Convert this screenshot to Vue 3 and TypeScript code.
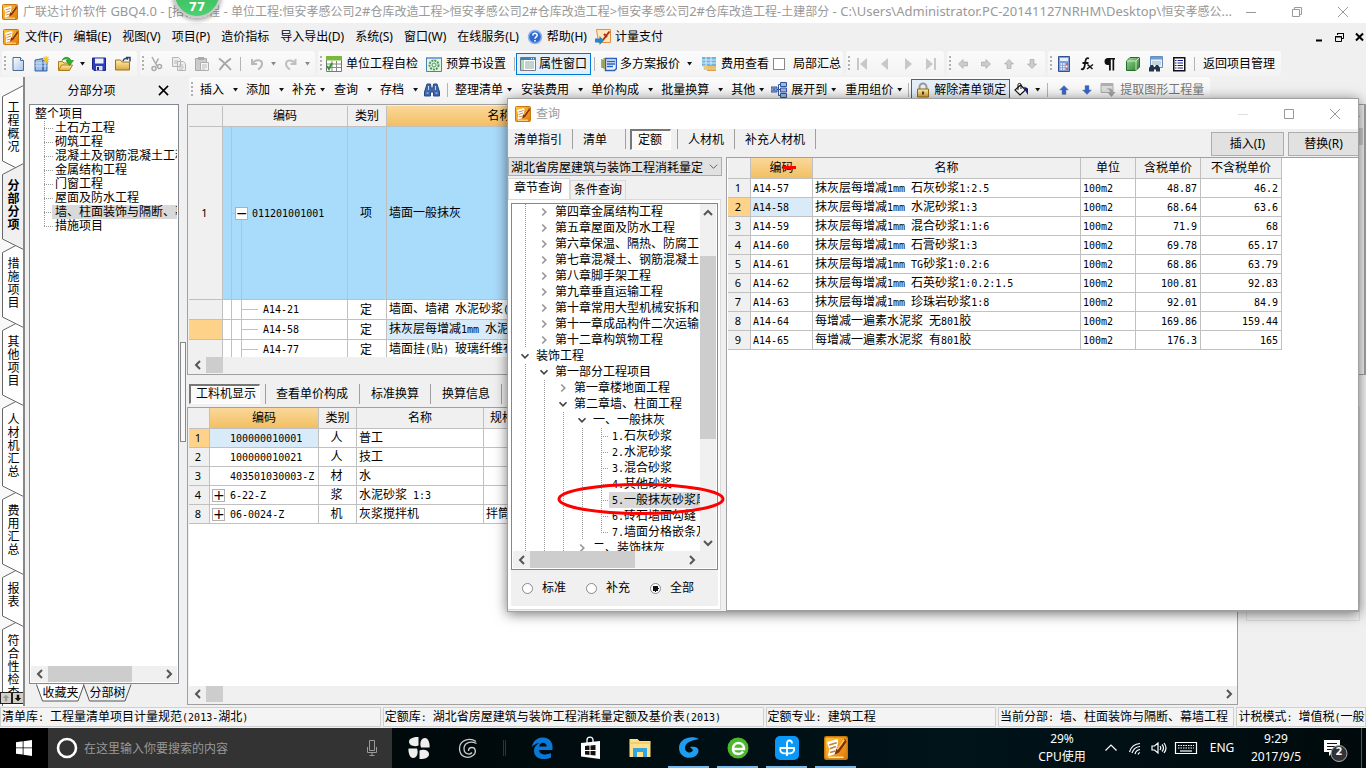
<script setup lang="ts">
import { h, ref } from 'vue'

// Splits text into CJK runs and half-width ASCII runs, so that ASCII is set in a 6px wide face.
const Mix = (p: { t: string }) =>
  h(
    'span',
    { class: 'mix' },
    (p.t.match(/[\x20-\x7e]+|[^\x20-\x7e]+/g) || []).map(s =>
      /^[\x20-\x7e]/.test(s) ? h('span', { class: 'half' }, s) : s
    )
  )
Mix.props = ['t']

const keyword = ref('')
const scope = ref('全部')
const book = ref('湖北省房屋建筑与装饰工程消耗量定')

const caption =
  '广联达计价软件 GBQ4.0 - [招标工程 - 单位工程:恒安孝感公司2#仓库改造工程>恒安孝感公司2#仓库改造工程>恒安孝感公司2#仓库改造工程-土建部分 - C:\\Users\\Administrator.PC-20141127NRHM\\Desktop\\恒安孝感公...'
const menusA = ['文件(F)', '编辑(E)', '视图(V)', '项目(P)', '造价指标', '导入导出(D)', '系统(S)', '窗口(W)', '在线服务(L)']
const sideTabs = ['工程概况', '分部分项', '措施项目', '其他项目', '人材机汇总', '费用汇总', '报表', '符合性检查'].map((t, i) => {
  const H = t.length * 13 + 35
  return { t, i, H, d: `M23.5 ${H - 0.5}L2.5 ${H - 11}V11.5L23.5 0.5` }
})
const parts = ['土石方工程', '砌筑工程', '混凝土及钢筋混凝土工程', '金属结构工程', '门窗工程', '屋面及防水工程', '墙、柱面装饰与隔断、幕墙', '措施项目']

const editMenus = [
  { t: '插入' }, { t: '添加' }, { t: '补充', tight: true }, { t: '查询' }, { t: '存档' }
]
const priceMenus = [
  { t: '整理清单', tight: true }, { t: '安装费用' }, { t: '单价构成' }, { t: '批量换算' }, { t: '其他', tight: true }
]

const subRows = [
  { code: 'A14-21', name: '墙面、墙裙 水泥砂浆(' },
  { code: 'A14-58', name: '抹灰层每增减1mm 水泥', on: true },
  { code: 'A14-77', name: '墙面挂(贴) 玻璃纤维布' }
]
const resRows = [
  { n: 1, code: '100000010001', kind: '人', name: '普工', spec: '', on: true },
  { n: 2, code: '100000010021', kind: '人', name: '技工', spec: '' },
  { n: 3, code: '403501030003-Z', kind: '材', name: '水', spec: '' },
  { n: 4, code: '6-22-Z', kind: '浆', name: '水泥砂浆 1:3', spec: '', plus: true },
  { n: 8, code: '06-0024-Z', kind: '机', name: '灰浆搅拌机', spec: '拌筒', plus: true }
]
const quotas = [
  ['A14-57', '抹灰层每增减1mm 石灰砂浆1:2.5', '48.87', '46.2'],
  ['A14-58', '抹灰层每增减1mm 水泥砂浆1:3', '68.64', '63.6'],
  ['A14-59', '抹灰层每增减1mm 混合砂浆1:1:6', '71.9', '68'],
  ['A14-60', '抹灰层每增减1mm 石膏砂浆1:3', '69.78', '65.17'],
  ['A14-61', '抹灰层每增减1mm TG砂浆1:0.2:6', '68.86', '63.79'],
  ['A14-62', '抹灰层每增减1mm 石英砂浆1:0.2:1.5', '100.81', '92.83'],
  ['A14-63', '抹灰层每增减1mm 珍珠岩砂浆1:8', '92.01', '84.9'],
  ['A14-64', '每增减一遍素水泥浆 无801胶', '169.86', '159.44'],
  ['A14-65', '每增减一遍素水泥浆 有801胶', '176.3', '165']
]
type Node = { d: number; t: string; k: 'open' | 'shut' | 'leaf'; on?: boolean; last?: boolean }
const chapters: Node[] = [
  { d: 1, t: '第四章金属结构工程', k: 'shut' },
  { d: 1, t: '第五章屋面及防水工程', k: 'shut' },
  { d: 1, t: '第六章保温、隔热、防腐工', k: 'shut' },
  { d: 1, t: '第七章混凝土、钢筋混凝土', k: 'shut' },
  { d: 1, t: '第八章脚手架工程', k: 'shut' },
  { d: 1, t: '第九章垂直运输工程', k: 'shut' },
  { d: 1, t: '第十章常用大型机械安拆和', k: 'shut' },
  { d: 1, t: '第十一章成品构件二次运输', k: 'shut' },
  { d: 1, t: '第十二章构筑物工程', k: 'shut' },
  { d: 0, t: '装饰工程', k: 'open' },
  { d: 1, t: '第一部分工程项目', k: 'open' },
  { d: 2, t: '第一章楼地面工程', k: 'shut' },
  { d: 2, t: '第二章墙、柱面工程', k: 'open' },
  { d: 3, t: '一、一般抹灰', k: 'open' },
  { d: 4, t: '1.石灰砂浆', k: 'leaf' },
  { d: 4, t: '2.水泥砂浆', k: 'leaf' },
  { d: 4, t: '3.混合砂浆', k: 'leaf' },
  { d: 4, t: '4.其他砂浆', k: 'leaf' },
  { d: 4, t: '5.一般抹灰砂浆厚', k: 'leaf', on: true },
  { d: 4, t: '6.砖石墙面勾缝', k: 'leaf' },
  { d: 4, t: '7.墙面分格嵌条及', k: 'leaf', last: true },
  { d: 3, t: '二、装饰抹灰', k: 'shut' }
]
</script>

<template>
  <div class="desk">
    <svg class="defs" aria-hidden="true">
      <defs>
        <linearGradient id="gOr" x1="0" y1="0" x2="1" y2="1"><stop offset="0" stop-color="#ffc83c" /><stop offset="1" stop-color="#e07808" /></linearGradient>
        <linearGradient id="gPg" x1="0" y1="0" x2="1" y2="1"><stop offset="0" stop-color="#fff" /><stop offset="1" stop-color="#a9c4e6" /></linearGradient>
        <linearGradient id="gFo" x1="0" y1="0" x2="0" y2="1"><stop offset="0" stop-color="#fff0b0" /><stop offset="1" stop-color="#dca63c" /></linearGradient>
        <linearGradient id="gGr" x1="0" y1="0" x2="1" y2="1"><stop offset="0" stop-color="#a4dc98" /><stop offset="1" stop-color="#237a2c" /></linearGradient>
      </defs>
      <symbol id="logo" viewBox="0 0 16 16"><rect x=".5" y=".5" width="15" height="15" rx="1" fill="url(#gOr)" stroke="#c8780c" /><path d="M2 4l7-2 .5 1.500L8 12l-5.500 1.500L3.500 9z" fill="#fff" /><path d="M3.500 6l5-1.500M3.800 8.500L8 7M4 11l3.500-1" stroke="#c88030" stroke-width=".9" /><path d="M14 1.500L8 9l-1 3.500L10 11l5-7z" fill="#8a2c10" /><path d="M13.500 2.500L8.800 9" stroke="#ffd050" /><path d="M3 14.200h10" stroke="#ffe9b0" /></symbol>
      <symbol id="new" viewBox="0 0 16 16"><path d="M3 1.500h7.500l3 3v10H3z" fill="url(#gPg)" stroke="#4b6c98" /><path d="M10.500 1.500v3h3" fill="#fff" stroke="#4b6c98" /></symbol>
      <symbol id="build" viewBox="0 0 16 16"><path d="M1 4l8-1.500V15H1zM9 4h4v11H9z" fill="#7aa5dc" stroke="#3d6aa8" /><path d="M3 4v10M5 4v10M7 4v10M11 5v9M1 7h12M1 10h12" stroke="#dbe9fa" stroke-width=".8" /><path d="M12 0v7M8.500 3.500h7M9.500 1l5 5M14.500 1l-5 5" stroke="#f5c518" stroke-width="1.200" /></symbol>
      <symbol id="open" viewBox="0 0 16 16"><path d="M.5 14V5.500h4L6 7h6v2" fill="#f8d870" stroke="#ad7c16" /><path d="M.5 14.500L3.500 9h11l-3 5.500z" fill="url(#gFo)" stroke="#ad7c16" /><path d="M4 4.500C5.500.5 11 0 13 4.500h2.500L11.500 9.500 8 4.500h2C9.500 2.500 6 2.500 4 4.500z" fill="#2bb32b" stroke="#1d7e1d" stroke-width=".6" /></symbol>
      <symbol id="save" viewBox="0 0 16 16"><path d="M1.500 2h13v12.500H3L1.500 13z" fill="#2c3fbd" stroke="#1a2680" /><path d="M4 2.500h8.500v5H4z" fill="#eef2ff" /><path d="M5 10h6.500v4.500H5z" fill="#dfe3f5" /><path d="M6 11h2v3H6z" fill="#1a2680" /></symbol>
      <symbol id="folder" viewBox="0 0 16 16"><path d="M.5 14V4h5l1.500 2h7.500v8z" fill="url(#gFo)" stroke="#9a7020" /><path d="M8 5c1-3 4-3 5-1.500M11 1.500h4v4" fill="none" stroke="#28466e" stroke-width="1.500" /></symbol>
      <symbol id="cut" viewBox="0 0 16 16"><path d="M4 1l5 9M10.500 2.500L7.500 8" stroke="#aaa" stroke-width="1.500" /><circle cx="6" cy="12.500" r="2" fill="none" stroke="#aaa" stroke-width="1.500" /><circle cx="11.500" cy="10.500" r="2" fill="none" stroke="#aaa" stroke-width="1.500" /></symbol>
      <symbol id="copy" viewBox="0 0 16 16"><path d="M1.500 1.500h6l2 2v7h-8zM6.500 5.500h6l2 2v7h-8z" fill="#eee" stroke="#b4b4b4" /><path d="M3 5h4M3 7h3M8 9h4M8 11h5M8 13h4" stroke="#bbb" /></symbol>
      <symbol id="paste" viewBox="0 0 16 16"><path d="M1.500 2.500h11v12h-11z" fill="#ccc" stroke="#aaa" /><path d="M4 1h6v3H4z" fill="#aaa" /><path d="M6.500 6.500h8v8h-8z" fill="#f3f3f3" stroke="#b0b0b0" /><path d="M8 9h5M8 11h5M8 13h3" stroke="#bbb" /></symbol>
      <symbol id="del" viewBox="0 0 16 16"><path d="M2 2.500Q7 6 14 14M14 2.500Q7 7 2.500 14" fill="none" stroke="#a6a6a6" stroke-width="1.800" /></symbol>
      <symbol id="undo" viewBox="0 0 16 16"><path d="M3 3v5h5M3.500 7.500c3-5 10-4 9.500.500 0 3-2 4-4 5.500" fill="none" stroke="#b8b8b8" stroke-width="2" /></symbol>
      <symbol id="redo" viewBox="0 0 16 16"><path d="M12.500 3v5h-5M12 7.500C9 3 3 4 3 8c0 3 2 4 4 5.500" fill="none" stroke="#c0c0c0" stroke-width="2" /></symbol>
      <symbol id="check" viewBox="0 0 16 16"><path d="M.5.500h15v15H.5z" fill="#fff" stroke="#777" /><path d="M0 0h16v4.500H0z" fill="#7cb83c" /><path d="M1 8h14M1 11.500h14M6 5v10M10.500 5v10" stroke="#888" /><path d="M1 10l2 3 3-6" fill="none" stroke="#2c9a2c" stroke-width="2" /></symbol>
      <symbol id="gear" viewBox="0 0 16 16"><path d="M.5 1.500h15v14H.5z" fill="#e4f3e4" stroke="#4c80b0" /><path d="M1 1h14v2H1z" fill="#7aa7d8" /><circle cx="8" cy="9" r="4.500" fill="none" stroke="#4a9c5c" stroke-width="2" stroke-dasharray="2 1" /><circle cx="8" cy="9" r="2" fill="none" stroke="#4a9c5c" /></symbol>
      <symbol id="props" viewBox="0 0 16 16"><path d="M.5 1.500h15v13H.5z" fill="#fff" stroke="#778" /><path d="M1 1.500h14v2.500H1z" fill="#3f7fb8" /><path d="M1 4h3v10H1z" fill="#a8dcb4" /><path d="M5 6h9M5 8h9M5 10h9M5 12h9" stroke="#8aa49a" /><path d="M11 2.700h3" stroke="#fff" stroke-dasharray="1 1" /></symbol>
      <symbol id="multi" viewBox="0 0 16 16"><path d="M.8 3v9M3 2v11" stroke="#e0a020" stroke-width="1.500" /><path d="M2 4v8" stroke="#2a9c3c" /><path d="M4.500 2.500h11v10l-2 2h-9z" fill="#eaf3ff" stroke="#2a62c0" stroke-width="1.500" /><path d="M6 5.500h8M6 8h8M6 10.500h6" stroke="#2a62c0" stroke-width="1.300" /></symbol>
      <symbol id="fee" viewBox="0 0 16 16"><path d="M1 1h14v9H1z" fill="#6fb4dc" /><path d="M1 4h14M1 7h14M5 1v9M10 1v9" stroke="#d8eefa" /><path d="M6 9h9v6H6z" fill="#d8a040" /><path d="M6 11h9M6 13h9" stroke="#fbe0a0" /><path d="M2 9l5 1v4H3z" fill="#ecc884" /></symbol>
      <symbol id="first" viewBox="0 0 16 16"><path d="M3 2h2v12H3zM13 2v12L6 8z" fill="#c8c8c8" /></symbol>
      <symbol id="prev" viewBox="0 0 16 16"><path d="M11 2v12L4 8z" fill="#c8c8c8" /></symbol>
      <symbol id="next" viewBox="0 0 16 16"><path d="M5 2v12l7-6z" fill="#c8c8c8" /></symbol>
      <symbol id="last" viewBox="0 0 16 16"><path d="M11 2h2v12h-2zM3 2v12l7-6z" fill="#c8c8c8" /></symbol>
      <symbol id="arrow" viewBox="0 0 16 16"><path d="M8 3.500l4.500 4.500H10v4.500H6V8H3.500z" fill="currentColor" stroke="#8888" stroke-width=".8" /></symbol>
      <symbol id="calc" viewBox="0 0 16 16"><path d="M2.500.500h11v15h-11z" fill="#7e9fd8" stroke="#345090" /><path d="M4 2h8v3H4z" fill="#e6efff" /><path d="M4.500 8h7M4.500 10.500h7M4.500 13h7" stroke="#fff" stroke-width="1.600" stroke-dasharray="1.600 1" /><path d="M10 8h2M10 13h2" stroke="#d04040" stroke-width="1.600" /></symbol>
      <symbol id="fx" viewBox="0 0 16 16"><path d="M10 2.500C7 1 6.500 4 6 8s-1.500 6-4 5M3.500 7h6" fill="none" stroke="#111" stroke-width="1.800" /><path d="M8.500 8.500l5 4.500M14 8.500L8 13" stroke="#111" stroke-width="1.500" /></symbol>
      <symbol id="para" viewBox="0 0 16 16"><path d="M13 2H6a3.500 3.500 0 0 0 0 7h1v5.500h1.800V3.500h1.700v11h1.700V3.500H13z" fill="#111" /></symbol>
      <symbol id="cube" viewBox="0 0 16 16"><path d="M1.500 5L5 1.500h9.500V11L11 14.500H1.500z" fill="url(#gGr)" stroke="#246c2c" /><path d="M1.500 5H11v9.500M11 5l3.500-3.500" fill="none" stroke="#cdeac8" /></symbol>
      <symbol id="find" viewBox="0 0 16 16"><path d="M2.500.500h12v11h-12z" fill="#e8f0fb" stroke="#6a8cc0" /><path d="M3 1h11v2.500H3z" fill="#6f9ad8" /><path d="M4 6h9M4 8h9" stroke="#9bb" /><path d="M1 12l2-3h2l1 2h1l1-2h2l2 3v3.500H8v-2H6v2H1z" fill="#23344c" /></symbol>
      <symbol id="list" viewBox="0 0 16 16"><path d="M2.750 1.750h11v13h-11z" fill="#fff" stroke="#111" stroke-width="1.500" /><path d="M4 4.500h1.500M4 7h1.500M4 9.500h1.500M4 12h1.500M6.500 4.500H12M6.500 7H12M6.500 9.500H12M6.500 12H12" stroke="#1a1a90" stroke-width="1.200" /></symbol>
      <symbol id="bino" viewBox="0 0 16 16"><path d="M3 2h3.500l.5 4h2l.5-4H13l2.500 8v4h-6v-4h-3v4h-6v-4z" fill="#3f66a8" stroke="#274880" /><path d="M2.500 11h2M11.500 11h2M4.500 4v4M11.500 4v4" stroke="#bcd2f2" /></symbol>
      <symbol id="tree" viewBox="0 0 16 16"><path d="M0 5h6v5H0zM9.500.500h6v4h-6zM9.500 6h6v4h-6zM9.500 11.500h6v4h-6z" fill="#9ab8ea" stroke="#33549a" /><path d="M6 7.500h3.500M7.500 2.500v11M7.500 2.500h2M7.500 13.500h2" fill="none" stroke="#33549a" /><path d="M1.500 6l3 3M4.500 6l-3 3" stroke="#33549a" /></symbol>
      <symbol id="lock" viewBox="0 0 16 16"><path d="M4.500 8V5a3.500 3.500 0 0 1 7 0v3" fill="none" stroke="#9a9a9a" stroke-width="2" /><path d="M2.500 7h11v8h-11z" fill="url(#gFo)" stroke="#9a6c10" /><path d="M8 9.500v3" stroke="#5c3c00" stroke-width="2" /></symbol>
      <symbol id="fill" viewBox="0 0 16 16"><path d="M7.500 3l5 5-5.500 5-5-5z" fill="#fff" stroke="#111" stroke-width="1.200" /><path d="M5 8V2.500C5 1 8 1 8 2.500V7" fill="none" stroke="#111" /><path d="M11 4.500l4 2V13l-2-3z" fill="#1a1a80" /></symbol>
      <symbol id="extract" viewBox="0 0 16 16"><path d="M1 1.500h12v9H1z" fill="#ddd" stroke="#aaa" /><path d="M1 1h12v3H1z" fill="#b0b0b0" /><path d="M6 7c4-2 7 0 7 3h2.500L11.500 15 7.500 10.500H10C10 8.500 9 7 6 7z" fill="#a4a4a4" /></symbol>
      <symbol id="help" viewBox="0 0 16 16"><circle cx="8" cy="8" r="6.500" fill="#2e6ad0" stroke="#8fb4ea" stroke-width="1.500" /><path d="M5.800 6.500C5.800 3.500 10.400 3.700 10.200 6.300 10 8 8 7.800 8 9.800" fill="none" stroke="#fff" stroke-width="1.500" /><path d="M7.200 11h1.600v1.500H7.200z" fill="#fff" /></symbol>
      <symbol id="pay" viewBox="0 0 16 16"><path d="M1.500.500h14v13h-12z" fill="#ffe6bc" stroke="#e09040" /><path d="M14.500 2.500L8 11M9 5l3 3" stroke="#b03018" stroke-width="2" /><path d="M0 9.500h4.500V7L9 11.500 4.500 16v-2.500H0z" fill="#2387cc" /></symbol>
      <symbol id="ch" viewBox="0 0 16 16"><path d="M10 4L6 8l4 4" fill="none" stroke="currentColor" stroke-width="2" /></symbol>
    </svg>

    <header class="title">
      <svg class="i"><use href="#logo" /></svg>
      <h1 class="caption"><Mix :t="caption" /></h1>
      <button class="win" aria-label="最小化"><svg viewBox="0 0 12 12"><path d="M1 6.500h10" /></svg></button>
      <button class="win" aria-label="还原"><svg viewBox="0 0 12 12"><path d="M1.500 3.500h7v7h-7zM3.500 3V1.500h7v7H9" /></svg></button>
      <button class="win" aria-label="关闭"><svg viewBox="0 0 12 12"><path d="M1 1l10 10M11 1L1 11" /></svg></button>
    </header>
    <div class="bubble">77</div>

    <nav class="menu">
      <svg class="i"><use href="#logo" /></svg>
      <button v-for="m in menusA" :key="m">{{ m }}</button>
      <button class="mi"><svg class="i"><use href="#help" /></svg>帮助(H)</button>
      <button class="mi"><svg class="i"><use href="#pay" /></svg>计量支付</button>
      <span class="grow"></span>
      <button class="mdi" aria-label="最小化"><svg viewBox="0 0 12 12"><path d="M2 9.500h6" stroke-width="2" /></svg></button>
      <button class="mdi" aria-label="还原"><svg viewBox="0 0 12 12"><path d="M1.500 5.500h6v5h-6zM1 6h7M3.500 4V2.500h6v5H8M3 2.500h7" /></svg></button>
      <button class="mdi" aria-label="关闭"><svg viewBox="0 0 12 12"><path d="M2 2.500l7 7M9 2.500l-7 7" stroke-width="2" /></svg></button>
    </nav>

    <div class="bar">
      <div class="grp file">
        <i class="grip"></i>
        <button class="ib" aria-label="新建"><svg class="i"><use href="#new" /></svg></button>
        <button class="ib" aria-label="新建工程"><svg class="i"><use href="#build" /></svg></button>
        <button class="ib" aria-label="打开"><svg class="i"><use href="#open" /></svg></button>
        <button class="da" aria-label="打开列表"><i class="tri"></i></button>
        <button class="ib" aria-label="保存"><svg class="i"><use href="#save" /></svg></button>
        <button class="ib" aria-label="目录"><svg class="i"><use href="#folder" /></svg></button>
      </div>
      <div class="grp">
        <i class="grip"></i>
        <button class="ib" aria-label="剪切"><svg class="i"><use href="#cut" /></svg></button>
        <button class="ib" aria-label="复制"><svg class="i"><use href="#copy" /></svg></button>
        <button class="ib" aria-label="粘贴"><svg class="i"><use href="#paste" /></svg></button>
        <button class="ib" aria-label="删除"><svg class="i"><use href="#del" /></svg></button>
        <i class="sep"></i>
        <button class="ib" aria-label="撤销"><svg class="i"><use href="#undo" /></svg></button>
        <button class="da" aria-label="撤销列表"><i class="tri dim"></i></button>
        <button class="ib" aria-label="恢复"><svg class="i"><use href="#redo" /></svg></button>
        <button class="da" aria-label="恢复列表"><i class="tri dim"></i></button>
      </div>
      <div class="grp">
        <i class="grip"></i>
        <button class="tb"><svg class="i"><use href="#check" /></svg>单位工程自检</button>
        <button class="tb"><svg class="i"><use href="#gear" /></svg>预算书设置</button>
        <i class="sep"></i>
        <button class="tb on"><svg class="i"><use href="#props" /></svg>属性窗口</button>
        <i class="sep"></i>
        <button class="tb wide"><svg class="i"><use href="#multi" /></svg>多方案报价<i class="tri"></i></button>
        <button class="tb"><svg class="i"><use href="#fee" /></svg>费用查看</button>
        <label class="ck"><input type="checkbox" />局部汇总</label>
      </div>
      <div class="grp">
        <i class="grip"></i>
        <button v-for="n in ['first', 'prev', 'next', 'last']" :key="n" class="ib" :aria-label="n"><svg class="i"><use :href="'#' + n" /></svg></button>
      </div>
      <div class="grp arrows">
        <i class="grip"></i>
        <button class="ib" aria-label="升级"><svg class="i r270"><use href="#arrow" /></svg></button>
        <button class="ib" aria-label="降级"><svg class="i r90"><use href="#arrow" /></svg></button>
        <button class="ib" aria-label="上移"><svg class="i"><use href="#arrow" /></svg></button>
        <button class="ib" aria-label="下移"><svg class="i r180"><use href="#arrow" /></svg></button>
      </div>
      <div class="grp">
        <i class="grip"></i>
        <button v-for="n in ['calc', 'fx', 'para', 'cube', 'find', 'list']" :key="n" class="ib" :aria-label="n"><svg class="i"><use :href="'#' + n" /></svg></button>
        <i class="sep"></i>
        <button class="tb">返回项目管理</button>
      </div>
    </div>

    <div class="body">
      <div class="side">
        <button v-for="s in sideTabs" :key="s.t" :class="['st', 'z' + s.i, { cur: s.i === 1 }]">
          <svg :width="25" :height="s.H" :viewBox="`0 0 25 ${s.H}`"><path :d="s.d" /></svg>
          <span>{{ s.t }}</span>
        </button>
        <div class="spin">
          <button aria-label="上一页"><svg viewBox="0 0 12 12"><path d="M6 2l4 4H7.500v4h-3V6H2z" fill="#999" /></svg></button>
          <button aria-label="下一页"><svg viewBox="0 0 12 12"><path d="M6 10l4-4H7.500V2h-3v4H2z" fill="#111" /></svg></button>
        </div>
      </div>

      <aside class="panel">
        <div class="ph"><h2>分部分项</h2><button aria-label="关闭面板"><svg viewBox="0 0 12 12"><path d="M1 1l10 10M11 1L1 11" /></svg></button></div>
        <div class="ptree">
          <ul>
            <li class="root">整个项目</li>
            <li v-for="(p, i) in parts" :key="p" :class="{ sel: i === 6, end: i === 7 }"><span>{{ p }}</span></li>
          </ul>
          <div class="hs h16">
            <button aria-label="左"><svg class="i"><use href="#ch" /></svg></button>
            <i class="thumb t84"></i><i class="grow"></i>
            <button aria-label="右"><svg class="i r180"><use href="#ch" /></svg></button>
          </div>
        </div>
        <div class="ptabs">
          <button><svg viewBox="0 0 49 18"><path class="w" d="M.5.500l6 16.500h35.500L48 .5" /></svg><span>收藏夹</span></button>
          <button><svg viewBox="0 0 49 18"><path d="M.5.500l6 16.500h35.500L48 .5" /></svg><span>分部树</span></button>
        </div>
      </aside>
      <div class="split"><i></i></div>

      <main class="right">
        <div class="bar two">
          <div class="grp">
            <i class="grip"></i>
            <button v-for="m in editMenus" :key="m.t" :class="['dd', { tight: m.tight }]">{{ m.t }}<i class="tri"></i></button>
            <button class="ib bino" aria-label="查找"><svg class="i"><use href="#bino" /></svg></button>
            <i class="sep"></i>
            <span class="gap3"></span>
            <button v-for="m in priceMenus" :key="m.t" :class="['dd', { tight: m.tight }]">{{ m.t }}<i class="tri"></i></button>
            <button class="dd tight"><svg class="i"><use href="#tree" /></svg>展开到<i class="tri"></i></button>
            <button class="dd tight end">重用组价<i class="tri"></i></button>
            <i class="sep"></i>
            <button class="tb on lk"><svg class="i"><use href="#lock" /></svg>解除清单锁定</button>
            <button class="ib" aria-label="填充"><svg class="i"><use href="#fill" /></svg></button>
            <button class="da" aria-label="填充列表"><i class="tri"></i></button>
            <i class="sep"></i>
            <button class="ib blue" aria-label="上移"><svg class="i"><use href="#arrow" /></svg></button>
            <button class="ib blue" aria-label="下移"><svg class="i r180"><use href="#arrow" /></svg></button>
            <button class="tb off"><svg class="i"><use href="#extract" /></svg>提取图形工程量</button>
          </div>
        </div>

        <section class="upper">
          <div class="view">
            <table class="g">
              <colgroup><col class="c34" /><col class="c125" /><col class="c39" /><col class="c226" /><col /></colgroup>
              <thead><tr><th></th><th>编码</th><th>类别</th><th class="hot">名称</th><th></th></tr></thead>
              <tbody>
                <tr class="big">
                  <td class="no">1</td>
                  <td class="tc0"><b class="pm">−</b><Mix t="011201001001" /></td>
                  <td class="ce">项</td><td>墙面一般抹灰</td><td></td>
                </tr>
                <tr v-for="r in subRows" :key="r.code" class="h20">
                  <td :class="['no', { hot2: r.on }]"></td>
                  <td class="tc1"><Mix :t="r.code" /></td>
                  <td class="ce">定</td><td :class="{ pick: r.on }"><Mix :t="r.name" /></td><td></td>
                </tr>
              </tbody>
            </table>
            <div class="vs narrow"><button aria-label="上"><svg class="i r90"><use href="#ch" /></svg></button><i class="thumb v17"></i></div>
          </div>
          <div class="hs h16">
            <button aria-label="左"><svg class="i"><use href="#ch" /></svg></button><i class="thumb t17"></i>
          </div>
        </section>

        <div class="tabs">
          <button class="sunk">工料机显示</button><i class="bar1"></i>
          <button>查看单价构成</button><i class="bar1"></i>
          <button>标准换算</button><i class="bar1"></i>
          <button>换算信息</button><i class="bar1"></i>
        </div>

        <div class="low">
          <section class="lower">
            <div class="view">
              <table class="g">
                <colgroup><col class="c21" /><col class="c109" /><col class="c38" /><col class="c127" /><col class="c90" /><col /></colgroup>
                <thead><tr><th></th><th class="hot">编码</th><th>类别</th><th>名称</th><th class="le">规格</th><th></th></tr></thead>
                <tbody>
                  <tr v-for="r in resRows" :key="r.n">
                    <td :class="['no', { hot2: r.on }]">{{ r.n }}</td>
                    <td :class="['tc2', { pick: r.on }]"><b v-if="r.plus" class="pm">+</b><Mix :t="r.code" /></td>
                    <td class="ce">{{ r.kind }}</td><td><Mix :t="r.name" /></td><td>{{ r.spec }}</td><td></td>
                  </tr>
                </tbody>
              </table>
            </div>
            <div class="hs h16">
              <button aria-label="左"><svg class="i"><use href="#ch" /></svg></button><i class="thumb t17"></i><i class="grow"></i>
              <button aria-label="右"><svg class="i r180"><use href="#ch" /></svg></button>
            </div>
          </section>
          <div class="rest"><div class="box"></div></div>
        </div>
      </main>
    </div>

    <footer class="status">
      <span class="s1"><Mix t="清单库: 工程量清单项目计量规范(2013-湖北)" /></span>
      <span class="s1"><Mix t="定额库: 湖北省房屋建筑与装饰工程消耗量定额及基价表(2013)" /></span>
      <span class="s2"><Mix t="定额专业: 建筑工程" /></span>
      <span class="s3"><Mix t="当前分部: 墙、柱面装饰与隔断、幕墙工程" /></span>
      <span class="s4"><Mix t="计税模式: 增值税(一般计税方法)" /></span>
    </footer>

    <section class="dlg" role="dialog" aria-label="查询">
      <div class="dt">
        <svg class="i"><use href="#logo" /></svg><span class="grow">查询</span>
        <button class="win faint" aria-label="最小化"><svg viewBox="0 0 12 12"><path d="M1 6.500h10" /></svg></button>
        <button class="win" aria-label="最大化"><svg viewBox="0 0 12 12"><path d="M1.500 1.500h9v9h-9z" /></svg></button>
        <button class="win" aria-label="关闭"><svg viewBox="0 0 12 12"><path d="M1 1l10 10M11 1L1 11" /></svg></button>
      </div>
      <div class="dtabs">
        <button>清单指引</button><i class="bar1"></i>
        <button class="pr">清单</button><i class="bar1"></i>
        <button class="sunk">定额</button><i class="bar1"></i>
        <button>人材机</button><i class="bar1"></i>
        <button>补充人材机</button><i class="bar1"></i>
        <span class="grow"></span>
        <button class="push">插入(I)</button>
        <button class="push last">替换(R)</button>
      </div>
      <div class="dmain">
        <div class="dl">
          <div class="combo">
            <select v-model="book" aria-label="定额库"><option>湖北省房屋建筑与装饰工程消耗量定</option></select>
            <svg viewBox="0 0 12 12"><path d="M2 4l4 4 4-4" /></svg>
          </div>
          <div class="ct"><button class="cur">章节查询</button><button>条件查询</button></div>
          <div class="cp">
            <div class="ctree">
              <div class="rowx">
                <ul>
                  <li v-for="n in chapters" :key="n.t">
                    <i v-for="k in n.d" :key="k" class="gd"></i>
                    <i :class="['tw', n.k, { last: n.last }]"><svg v-if="n.k !== 'leaf'" class="i" :class="n.k === 'open' ? 'r270' : 'r180'"><use href="#ch" /></svg></i>
                    <span :class="{ sel: n.on }"><Mix :t="n.t" /></span>
                  </li>
                </ul>
                <div class="vs">
                  <button aria-label="上"><svg class="i r90"><use href="#ch" /></svg></button>
                  <i class="gap35"></i><i class="thumb v183"></i><i class="grow"></i>
                  <button aria-label="下"><svg class="i r270"><use href="#ch" /></svg></button>
                </div>
              </div>
              <div class="hs h17">
                <button aria-label="左"><svg class="i"><use href="#ch" /></svg></button>
                <i class="thumb t105"></i><i class="grow"></i>
                <button aria-label="右"><svg class="i r180"><use href="#ch" /></svg></button><i class="corner"></i>
              </div>
            </div>
            <div class="radios">
              <label v-for="o in ['标准', '补充', '全部']" :key="o"><input v-model="scope" type="radio" name="scope" :value="o" />{{ o }}</label>
            </div>
          </div>
        </div>
        <div class="dr">
          <table class="g q">
            <colgroup><col class="c23" /><col class="c62" /><col class="c268" /><col class="c55" /><col class="c65" /><col class="c81" /></colgroup>
            <thead><tr><th></th><th class="hot">编码<i class="mark"></i></th><th>名称</th><th>单位</th><th>含税单价</th><th>不含税单价</th></tr></thead>
            <tbody>
              <tr v-for="(q, i) in quotas" :key="q[0]">
                <td :class="['no', { hot2: i === 1 }]">{{ i + 1 }}</td>
                <td :class="{ pick: i === 1 }"><Mix :t="q[0]" /></td>
                <td><Mix :t="q[1]" /></td><td><Mix t="100m2" /></td>
                <td class="ri"><Mix :t="q[2]" /></td><td class="ri"><Mix :t="q[3]" /></td>
              </tr>
            </tbody>
          </table>
        </div>
      </div>
      <svg class="ring" viewBox="0 0 168 34"><ellipse cx="84" cy="17" rx="82" ry="14.500" /></svg>
    </section>

    <div class="task">
      <button class="start" aria-label="开始"><svg viewBox="0 0 16 16"><path d="M0 2.300l6.700-1v6.200H0zM7.500 1.200L16 0v7.500H7.500zM0 8.300h6.700v6.300L0 13.700zM7.500 8.300H16V16l-8.500-1.200z" fill="#fff" /></svg></button>
      <label class="search">
        <svg class="cort" viewBox="0 0 22 22"><circle cx="11" cy="11" r="9" fill="none" stroke="#fff" stroke-width="2.600" /></svg>
        <input v-model="keyword" placeholder="在这里输入你要搜索的内容" aria-label="搜索" />
        <svg class="mic" viewBox="0 0 12 18"><path d="M3.500 1.500h5v10h-5zM1.500 8v5.500h9V8M6 13.500V17M3.500 16.500h5" fill="none" stroke="#999" /></svg>
      </label>
      <button class="app" aria-label="浏览器"><svg viewBox="0 0 24 24"><g fill="#eee"><path d="M11.500 1v8.500C8 11 2 10 2 5.500 2 2 8 .5 11.500 1z" /><path d="M22.500 11.500H14C12.500 8 13.500 2 18 2c3.500 0 5 6 4.500 9.500z" /><path d="M12.500 23v-8.500C16 13 22 14 22 18.500c0 3.500-6 5-9.500 4.500z" /><path d="M1.500 12.500H10C11.500 16 10.500 22 6 22c-3.500 0-5-6-4.500-9.500z" /></g></svg></button>
      <button class="app" aria-label="云助手"><svg viewBox="0 0 24 24"><path d="M20 5.500C14 1 3.500 4 3.500 12.500S12 23.500 17 19.500c4-3 2.500-8-1-8-3 0-3.500 1.500-3.500 3.500M20.500 7.500C14 4.500 8 7 8 12.500s5.500 7 8 4" fill="none" stroke="#ccc" stroke-width="1.300" /></svg></button>
      <i class="tsep"></i>
      <button class="app" aria-label="Edge"><svg viewBox="0 0 24 24"><path d="M2 11C3 4 8 1.500 13 1.500c6 0 9.500 4.500 9.500 9V14H9c.3 5 7.500 5.500 12 3v4.500C13 25 4 22.500 4 15c0-4 2.500-6.500 5.500-8C7 7.200 4 8.500 2 11zm7.200-.5h7.500c0-5-7-5-7.500 0z" fill="#0a78d6" /></svg></button>
      <button class="app" aria-label="应用商店"><svg viewBox="0 0 24 24"><path d="M2 7l19-2v18L2 20.500z" fill="#fff" /><path d="M8 7V4c0-3.500 6-4 6 0v2" fill="none" stroke="#fff" stroke-width="1.300" /><path d="M6 10l4.500-.4V14H6zM11.500 9.500l5-.5v5h-5zM6 15h4.500v4L6 18.600zM11.500 15h5v4.600l-5-.5z" fill="#111" /></svg></button>
      <button class="app" aria-label="资源管理器"><svg viewBox="0 0 24 24"><path d="M1.500 3h8l2 2h11v16h-21z" fill="#ffe08a" /><path d="M1.500 7h21" stroke="#e8bc50" /><path d="M5 21v-9h14v9h-4v-5H9v5z" fill="#32a4e0" /></svg></button>
      <button class="app run" aria-label="广联达"><svg viewBox="0 0 24 24"><path d="M22 3C15-1 2 2 2 12c0 11 15 13 19 5 2-5-2-7-8-6l3 3c-1 4-8 3-8-2 0-6 8-8 14-9z" fill="#1e9cf0" /></svg></button>
      <button class="app run" aria-label="安全浏览器"><svg viewBox="0 0 24 24"><circle cx="12" cy="12" r="10.500" fill="#4cb82c" /><path d="M6 13h12c0-8-11-8-11 0 0 6 8 6 10 2.500" fill="none" stroke="#fff" stroke-width="2.500" /></svg></button>
      <button class="app run" aria-label="加密锁"><svg viewBox="0 0 24 24"><rect width="24" height="24" rx="5" fill="#0a98f8" /><path d="M12 20V7.500c0-4.500 5-3.500 5 0M4.500 12H19c1 6-6 6-7 4.500M5.500 12c-2 6 6.500 6 6.500 4.500" fill="none" stroke="#fff" stroke-width="1.800" /></svg></button>
      <button class="app run" aria-label="计价软件"><svg viewBox="0 0 16 16"><use href="#logo" /></svg></button>
      <span class="grow"></span>
      <div class="two-l cpu"><span>29%</span><span>CPU使用</span></div>
      <button class="tr c" aria-label="显示隐藏的图标"><svg viewBox="0 0 16 16"><path d="M2.500 10.500L8 5l5.500 5.500" /></svg></button>
      <button class="tr" aria-label="网络"><svg viewBox="0 0 16 16"><path d="M2.500 12A12 12 0 0 1 13 3.500M5 13a9.500 9.500 0 0 1 8-6.500M8 14a6 6 0 0 1 5-4.500M11 14.500a3 3 0 0 1 2-2" /></svg></button>
      <button class="tr" aria-label="音量"><svg viewBox="0 0 16 16"><path d="M1 6h2.500L7 3v10l-3.500-3H1zM9 6q1.500 2 0 4M11 4.500q3 3.500 0 7M13 3q4 5 0 10" /></svg></button>
      <button class="tr k" aria-label="键盘"><svg viewBox="0 0 24 16"><path d="M1.500 2.500h21v11h-21z" /><path d="M4 5.500h16M4 8h16" stroke-dasharray="1.500 1" /><path d="M6 11h12" /></svg></button>
      <span class="eng">ENG</span>
      <div class="two-l clock"><span>9:29</span><span>2017/9/5</span></div>
      <button class="note" aria-label="通知"><svg viewBox="0 0 26 26"><path d="M1 3h16v12H10l-4 4v-4H1z" fill="#fff" /><path d="M4 6.500h10M4 9.500h10M4 12.500h6" stroke="#111" /><circle cx="16" cy="16.500" r="8" fill="#333" stroke="#aaa" /></svg><b>2</b></button>
      <i class="edge"></i>
    </div>
  </div>
</template>

<style>
body { background: #f0f0f0; }
.mix { white-space: pre; }
.half { font-family: "DejaVu Sans Mono", monospace; font-size: 10px; }
.caption .half { font-family: "Noto Sans", sans-serif; font-size: 13px; }
</style>

<style scoped>
.desk { position: relative; display: flex; flex-direction: column; height: 100vh; overflow: hidden; background: #f0f0f0; color: #000; font: 12px/16px "Noto Sans", "Noto Sans CJK SC", sans-serif; white-space: nowrap; }
.desk * { box-sizing: border-box; }
.defs { position: absolute; width: 0; height: 0; }
button { margin: 0; padding: 0; border: 0; background: none; color: inherit; font: inherit; white-space: nowrap; }
h1, h2, ul { margin: 0; padding: 0; font: inherit; list-style: none; }
i { font-style: normal; }
.i { width: 16px; height: 16px; flex: none; display: block; }
.grow { flex: 1; }
.r90 { transform: rotate(90deg); } .r180 { transform: rotate(180deg); } .r270 { transform: rotate(270deg); }

.title { display: flex; align-items: center; height: 23px; padding-left: 2px; background: #fff; color: #999; }
.title h1 { flex: 1; min-width: 0; margin-left: 5px; }
.win { width: 46px; height: 22px; flex: none; display: flex; align-items: center; justify-content: center; }
.win svg { width: 12px; height: 12px; fill: none; stroke: #999; }
.faint svg { stroke: #ddd; }
.bubble { position: absolute; left: 173px; top: -30px; width: 48px; height: 48px; border-radius: 50%; border: 2px solid #c8ccc8; background: linear-gradient(#2fae55, #4cd070); box-shadow: 0 2px 5px #0006; color: #fff; font: bold 12px/16px "DejaVu Sans", sans-serif; text-align: center; padding-top: 27px; }

.menu { display: flex; align-items: center; height: 28px; padding: 0 3px; gap: 11px; }
.menu > .i { margin-right: -5px; }
.menu button { display: flex; align-items: center; gap: 4px; }
.menu .mi { margin-left: -3px; }
.menu .mdi { width: 9px; }
.mdi svg { width: 12px; height: 12px; flex: none; fill: none; stroke: #000; }

.bar { display: flex; gap: 3px; height: 26px; padding-left: 2px; }
.grp { display: flex; align-items: center; height: 25px; padding-right: 2px; background: linear-gradient(#fbfbfb, #f3f3f3); border-radius: 3px; }
.grip { width: 2px; height: 15px; margin-left: 2px; flex: none; background: repeating-linear-gradient(#b0b0b0 0 2px, transparent 2px 4px); }
.ib { width: 23px; height: 22px; display: flex; align-items: center; justify-content: center; }
.file .ib { width: 24px; }
.da { width: 11px; height: 22px; display: flex; align-items: center; justify-content: center; }
.file .da { width: 9px; }
.tri { width: 7px; height: 4px; flex: none; background: #111; clip-path: polygon(10% 0, 90% 0, 50% 100%); }
.dim { background: #888; }
.sep { width: 1px; height: 14px; margin: 0 4px; background: #b4b4b4; flex: none; }
.tb { display: flex; align-items: center; height: 22px; gap: 4px; padding: 0 4px; }
.on { border: 1px solid #0078d7; background: #e4eff9; margin: 0 -1px 0 -3px; gap: 3px; padding: 0 3px; }
.wide { padding: 0 0 0 2px; gap: 3px; }
.wide .tri { margin: 0 4px 0 3px; }
.ck { display: flex; align-items: center; gap: 8px; }
.ck input { appearance: none; width: 12px; height: 12px; margin: 0; border: 1px solid #888; background: #fff; }
.arrows { color: #ccc; }
.blue { color: #3565d0; }
.off { color: #777; padding-left: 2px; }

.body { flex: 1; min-height: 0; display: flex; }
.side { position: relative; flex: none; width: 25px; padding-top: 8px; overflow: hidden; background: #f8f8f8; border-right: 2px solid #888; }
.st { position: relative; display: block; width: 25px; }
.st svg { display: block; margin-bottom: -9px; fill: #fff; stroke: #666; }
.st span { position: absolute; left: 7px; top: 16px; width: 13px; white-space: normal; line-height: 13px; text-align: center; font-size: 12px; }
.cur svg { fill: #f0f0f0; }
.cur span { font-weight: bold; }
.z0 { z-index: 8; } .z1 { z-index: 9; } .z2 { z-index: 7; } .z3 { z-index: 6; } .z4 { z-index: 5; } .z5 { z-index: 4; } .z6 { z-index: 3; } .z7 { z-index: 2; }
.spin { position: absolute; z-index: 10; left: 0; bottom: 2px; display: flex; background: #d4d0c8; }
.spin button { width: 12px; height: 12px; border: 1px solid #222; }
.spin svg { display: block; width: 10px; height: 10px; }
.panel { display: flex; flex-direction: column; flex: none; width: 154px; padding-left: 4px; }
.ph { display: flex; align-items: center; height: 27px; }
.ph h2 { flex: 1; text-align: center; padding-left: 6px; }
.ph button { width: 31px; }
.ph svg { width: 11px; height: 11px; display: block; margin: auto; stroke: #000; stroke-width: 1.700; }
.ptree { flex: 1; display: flex; flex-direction: column; border: 1px solid #828790; background: #fff; padding: 1px; overflow: hidden; }
.ptree ul { flex: 1; overflow: hidden; padding-top: 1px; }
.ptree li { height: 14px; line-height: 14px; padding-left: 21px; background: repeating-linear-gradient(#999 0 1px, transparent 1px 2px) 13px 0/1px 100% no-repeat, repeating-linear-gradient(90deg, #999 0 1px, transparent 1px 2px) 13px 7px/9px 1px no-repeat; }
.ptree .root { padding-left: 4px; background: none; }
.ptree .end { background-size: 1px 8px, 9px 1px; }
.ptree li span { display: block; padding-left: 3px; }
.ptree .sel span { background-color: #d9d9d9; }
.ptabs { height: 22px; display: flex; padding-left: 7px; }
.ptabs button { position: relative; width: 49px; height: 18px; margin-right: -2px; }
.ptabs svg { position: absolute; inset: 0; width: 49px; height: 18px; fill: #f0f0f0; stroke: #555; }
.ptabs .w { fill: #fff; }
.ptabs span { position: relative; line-height: 18px; }
.split { flex: none; width: 8px; display: flex; align-items: center; }
.split i { width: 6px; height: 100px; margin: 0 0 0 1px; border: 1px solid #888; background: #f8f8f8; }

.hs { display: flex; flex: none; background: #f0f0f0; color: #555; }
.h16 { height: 16px; } .h17 { height: 17px; }
.hs button, .vs button { width: 17px; flex: none; display: flex; align-items: center; justify-content: center; }
.hs .i, .vs .i { width: 16px; height: 16px; }
.thumb { background: #cdcdcd; flex: none; }
.t84 { width: 84px; } .t17 { width: 17px; } .t105 { width: 105px; }
.vs { display: flex; flex-direction: column; flex: none; width: 16px; background: #f0f0f0; color: #555; }
.vs button { width: 16px; height: 17px; }
.v17 { height: 17px; margin-top: 5px; } .v183 { height: 183px; } .gap35 { height: 35px; } .corner { width: 16px; }

.right { flex: 1; min-width: 0; display: flex; flex-direction: column; }
.bar.two { height: 27px; flex: none; }
.dd { display: flex; align-items: center; height: 22px; }
.dd:first-of-type { margin-left: 7px; }
.dd .tri { margin: 0 7px 0 8px; }
.dd .i { margin: 0 4px 0 -2px; }
.tight .tri { margin: 0 8px 0 3px; }
.end .tri { margin: 0 1px 0 3px; }
.bino { margin-left: -6px; }
.gap3 { width: 3px; }
.bar .lk { margin: 0 -1px 0 -2px; }
.upper { flex: none; height: 271px; display: flex; flex-direction: column; border: 1px solid #a0a0a0; border-right-width: 2px; padding: 1px; background: #f0f0f0; }
.view { flex: 1; min-height: 0; overflow: hidden; display: flex; align-items: flex-start; background: #fff; }
.narrow { height: 100%; }
.g { border-collapse: separate; border-spacing: 0; table-layout: fixed; width: 100%; }
.g th, .g td { height: 19px; padding: 0 0 0 2px; border-right: 1px solid #c0c0c0; border-bottom: 1px solid #c0c0c0; font-weight: normal; text-align: left; line-height: 16px; overflow: hidden; }
.g th { height: 21px; padding: 0; background: #f0f0f0; text-align: center; }
.g .h20 td { height: 20px; }
.g .le { text-align: left; padding-left: 6px; }
.g .hot { background: linear-gradient(#fad79a, #f2c062); }
.g .no { background: #f0f0f0; text-align: center; font-size: 11px; padding: 0 2px 0 0; }
.g .hot2 { background: #ffd28a; }
.g .pick { background: #d9eaf9; }
.g .ce { text-align: center; padding: 0 2px 0 0; }
.g .ri { text-align: right; padding-right: 3px; }
.g .big td { height: 173px; background-color: #a9dbfb; }
.g .big .no { background: #f0f0f0; }
.c34 { width: 34px; } .c125 { width: 125px; } .c39 { width: 39px; } .c226 { width: 226px; }
.c21 { width: 21px; } .c109 { width: 109px; } .c38 { width: 38px; } .c127 { width: 127px; } .c90 { width: 90px; }
.c23 { width: 23px; } .c62 { width: 62px; } .c268 { width: 268px; } .c55 { width: 55px; } .c65 { width: 65px; } .c81 { width: 81px; }
.pm { display: inline-block; width: 13px; height: 13px; border: 1px solid #b0b0b0; background: #fff; font: 14px/10px "DejaVu Sans", sans-serif; text-align: center; vertical-align: middle; margin-right: 4px; }
.g .tc0 { padding-left: 12px; background: linear-gradient(#c0c0c0, #c0c0c0) 8px 0/1px 100% no-repeat, linear-gradient(#c0c0c0, #c0c0c0) 18px 100%/1px 50% no-repeat, linear-gradient(#c0c0c0, #c0c0c0) 8px 50%/5px 1px no-repeat #a9dbfb; }
.g .tc1 { padding-left: 40px; background: linear-gradient(#c0c0c0, #c0c0c0) 8px 0/1px 100% no-repeat, linear-gradient(#c0c0c0, #c0c0c0) 18px 0/1px 100% no-repeat, linear-gradient(#c0c0c0, #c0c0c0) 18px 50%/17px 1px no-repeat; }
.g .tc2 { padding-left: 20px; }
.g .tc2:has(.pm) { padding-left: 2px; }
.tc2 .pm { margin-right: 5px; }

.tabs { display: flex; flex: none; align-items: center; height: 32px; padding: 5px 0 0 2px; }
.tabs button, .dtabs button { padding: 0 11px; height: 20px; }
.bar1 { width: 1px; height: 20px; background: #a0a0a0; flex: none; }
.tabs .sunk, .dtabs .sunk { padding: 0 3px 0 5px; margin-right: 5px; background: #fafafa; border: 1px solid #fff; border-top: 2px solid #777; border-left: 2px solid #777; }
.tabs .sunk + .bar1 + button { padding-left: 10px; }
.low { flex: 1; min-height: 0; display: flex; padding-bottom: 1px; }
.lower { flex: 1; display: flex; flex-direction: column; border: 1px solid #a0a0a0; padding: 0 0 0 1px; background: #f0f0f0; min-width: 0; }
.lower .hs { margin-bottom: 2px; }
.rest { flex: none; width: 128px; padding: 0 6px 0 8px; }
.box { height: 214px; border: 1px solid #dcdcdc; border-top: 0; }

.status { flex: none; display: flex; gap: 2px; height: 22px; padding: 1px 0; line-height: 18px; }
.status span { min-width: 0; }
.status > span { border: 1px solid #d0d0d0; background: #f4f4f4; padding-left: 1px; overflow: hidden; height: 20px; }
.s1 { flex: 382; } .s2 { flex: 230; } .s3 { flex: 236; } .s4 { flex: 128; }

.dlg { position: absolute; left: 507px; right: 7px; top: 98px; bottom: 156px; display: flex; flex-direction: column; border: 1px solid #a0a0a0; background: #f0f0f0; box-shadow: 0 2px 12px #0008; z-index: 20; }
.dt { display: flex; align-items: center; height: 30px; flex: none; padding-left: 7px; background: #fff; color: #999; }
.dt .grow { padding-left: 5px; }
.dtabs { display: flex; height: 28px; flex: none; }
.dtabs button { height: 21px; padding: 0 10px; }
.dtabs button:first-child { padding-left: 6px; }
.dtabs .pr { padding-right: 18px; }
.dtabs .sunk { margin: 0 6px 0 4px; padding: 0 8px 0 6px; }
.dtabs .push { width: 73px; height: 24px; margin: 3px 4px 0 0; border: 1px solid #adadad; background: #e1e1e1; }
.dtabs .last { width: 70px; margin-right: 0; border-right: 0; }
.dmain { flex: 1; min-height: 0; display: flex; }
.dl { flex: none; width: 214px; display: flex; flex-direction: column; }
.combo { position: relative; height: 19px; }
.combo select { width: 100%; height: 19px; appearance: none; border: 1px solid #adadad; border-radius: 0; background: #e1e1e1; font: 12px/16px "Noto Sans CJK SC", sans-serif; padding: 0 0 0 2px; color: #000; }
.combo svg { position: absolute; right: 3px; top: 4px; width: 11px; height: 11px; fill: none; stroke: #555; }
.ct { display: flex; align-items: flex-end; height: 23px; }
.ct button { height: 19px; padding: 0 3px; border: 1px solid #d9d9d9; border-bottom: 0; }
.ct .cur { height: 21px; padding: 0 7px 2px 5px; background: #fff; }
.cp { flex: 1; min-height: 0; display: flex; flex-direction: column; width: 213px; padding: 3px 2px 3px 3px; border: 1px solid #d9d9d9; border-left: 0; background: #fff; margin-bottom: 1px; }
.ctree { flex: 1; min-height: 0; display: flex; flex-direction: column; border: 1px solid #828790; padding: 0 1px 1px; }
.rowx { flex: 1; min-height: 0; display: flex; }
.rowx ul { flex: 1; min-width: 0; overflow: hidden; }
.rowx li { display: flex; height: 16px; line-height: 16px; }
.gd, .tw { flex: none; width: 19px; background: repeating-linear-gradient(#999 0 1px, transparent 1px 2px) 12px 0/1px 100% no-repeat; }
.tw { color: #999; background: none; }
.tw .i { width: 14px; height: 14px; margin: 1px 0 0 5px; }
.tw.open { color: #444; }
.tw.leaf { background: repeating-linear-gradient(#999 0 1px, transparent 1px 2px) 12px 0/1px 100% no-repeat, repeating-linear-gradient(90deg, #999 0 1px, transparent 1px 2px) 12px 8px/7px 1px no-repeat; }
.tw.last { background-size: 1px 8px, 7px 1px; }
.rowx li > span { padding: 0 0 0 3px; margin-left: 1px; }
.rowx .sel { background: #d9d9d9; }
.radios { flex: none; display: flex; height: 36px; align-items: center; background: #f0f0f0; padding-left: 11px; }
.radios label { display: flex; align-items: center; width: 64px; gap: 9px; }
.radios input { appearance: none; width: 11px; height: 11px; margin: 0; border: 1px solid #888; border-radius: 50%; background: #fff; }
.radios input:checked { border-color: #888; background: radial-gradient(#111 0 3px, #fff 3px); }
.dr { flex: 1; min-width: 0; margin-left: 4px; border: 1px solid #a0a0a0; border-right: 0; padding: 0 0 0 1px; background: #fff; }
.q { width: 554px; }
.q .hot { position: relative; overflow: visible; }
.mark { position: absolute; left: 32px; top: 8px; width: 13px; height: 3px; background: #f00; }
.ring { position: absolute; left: 49px; top: 383px; width: 168px; height: 34px; fill: none; stroke: #f00; stroke-width: 3; }

.task { flex: none; display: flex; align-items: center; height: 40px; background: linear-gradient(90deg, #000 0, #00090b 30%, #00141a 70%, #000a0c); color: #fff; }
.start { width: 48px; height: 40px; background: #000; }
.start svg { width: 16px; height: 16px; display: block; margin: auto; }
.search { display: flex; align-items: center; width: 344px; height: 40px; padding: 0 14px 0 8px; background: #333; }
.cort { width: 22px; height: 22px; flex: none; }
.search input { flex: 1; min-width: 0; border: 0; padding: 0; margin-left: 6px; background: none; outline: 0; color: #fff; font: 12px/16px "Noto Sans CJK SC", sans-serif; }
.search input::placeholder { color: #999; }
.mic { width: 12px; height: 18px; }
.app { position: relative; width: 49px; height: 40px; }
.search + .app { margin-left: 2px; }
.app svg { width: 24px; height: 24px; display: block; margin: auto; }
.run::after { content: ""; position: absolute; left: 4px; right: 4px; bottom: 0; height: 2px; background: #76b9ed; }
.tsep { width: 3px; height: 16px; margin: 0 11px; border: solid #333; border-width: 0 1px; }
.two-l { display: flex; flex-direction: column; text-align: center; line-height: 18px; }
.cpu { width: 62px; margin-right: 6px; }
.clock { width: 66px; margin: 0 10px 0 3px; }
.tr { width: 24px; height: 24px; }
.tr svg { width: 16px; height: 16px; display: block; margin: auto; fill: none; stroke: #fff; stroke-width: 1.200; }
.k { width: 30px; }
.k svg { width: 24px; }
.eng { width: 36px; text-align: center; margin-left: 3px; }
.note { position: relative; width: 42px; height: 40px; padding-left: 4px; }
.note svg { width: 26px; height: 26px; display: block; margin-top: 4px; }
.note b { position: absolute; left: 13px; top: 15px; width: 14px; line-height: 16px; font-size: 11px; text-align: center; }
.edge { width: 1px; height: 40px; margin-right: 4px; background: #555; }
</style>
